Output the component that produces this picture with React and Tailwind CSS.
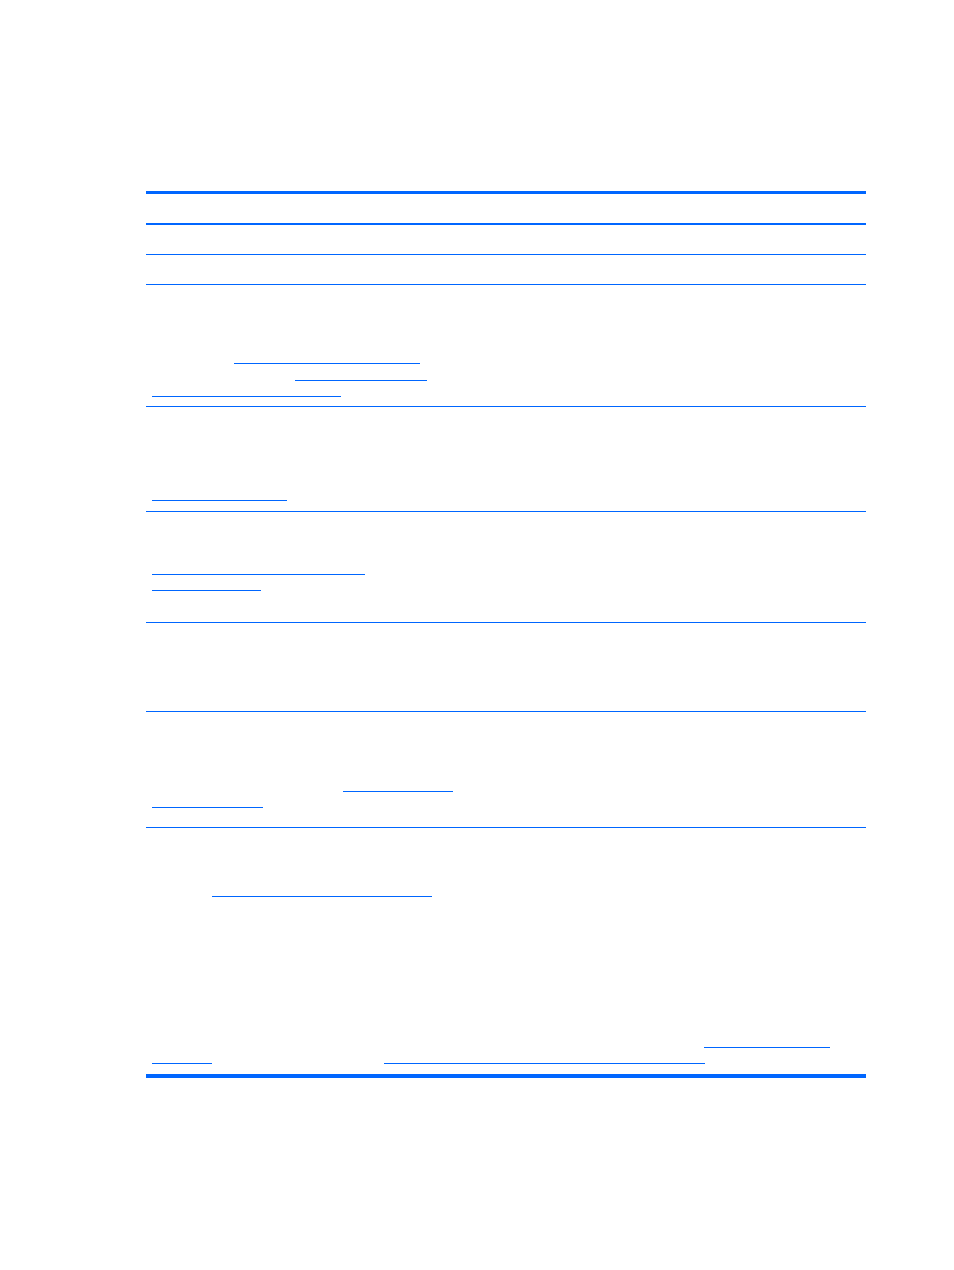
export default function App() {
  return (
    <div className="min-h-[1270px] w-[954px] bg-white pt-[191px] pl-[146px] font-['Liberation_Sans',sans-serif]">
      <div className="w-[720px] border-t-[3px] border-[#0066ff]">
        {/* header */}
        <div className="h-[31px] border-b-2 border-[#0066ff]" />
        <div className="h-[30px] border-b border-[#0066ff]" />
        <div className="h-[30px] border-b border-[#0066ff]" />

        <div className="h-[122px] border-b border-[#0066ff] pt-[78px]">
          <div className="h-px ml-[88px] w-[186px] bg-[#0066ff]" />
          <div className="h-px mt-[16px] ml-[149px] w-[132px] bg-[#0066ff]" />
          <div className="h-px mt-[15px] ml-[6px] w-[189px] bg-[#0066ff]" />
        </div>

        <div className="h-[105px] border-b border-[#0066ff] pt-[93px]">
          <div className="h-px ml-[6px] w-[135px] bg-[#0066ff]" />
        </div>

        <div className="h-[111px] border-b border-[#0066ff] pt-[62px]">
          <div className="h-px ml-[6px] w-[213px] bg-[#0066ff]" />
          <div className="h-px mt-[15px] ml-[6px] w-[109px] bg-[#0066ff]" />
        </div>

        <div className="h-[89px] border-b border-[#0066ff]" />

        <div className="h-[116px] border-b border-[#0066ff] pt-[79px]">
          <div className="h-px ml-[197px] w-[110px] bg-[#0066ff]" />
          <div className="h-px mt-[15px] ml-[6px] w-[111px] bg-[#0066ff]" />
        </div>

        <div className="h-[250px] border-b-4 border-[#0066ff] pt-[68px]">
          <div className="h-px ml-[66px] w-[220px] bg-[#0066ff]" />
          <div className="h-px mt-[150px] ml-[558px] w-[126px] bg-[#0066ff]" />
          <div className="flex mt-[15px] ml-[6px]">
            <div className="h-px w-[60px] bg-[#0066ff]" />
            <div className="h-px ml-[172px] w-[321px] bg-[#0066ff]" />
          </div>
        </div>
      </div>
    </div>
  );
}
